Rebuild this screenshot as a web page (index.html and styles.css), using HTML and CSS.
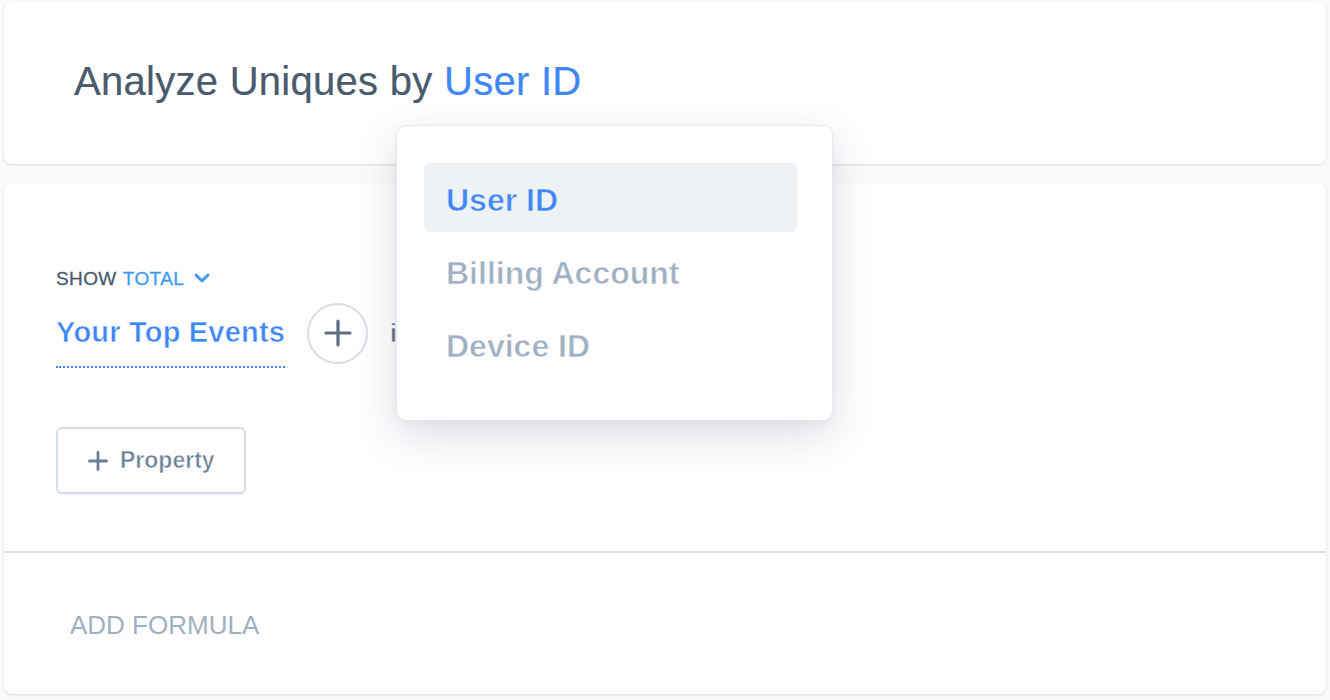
FILE: index.html
```html
<!DOCTYPE html>
<html>
<head>
<meta charset="utf-8">
<link rel="stylesheet" href="styles.css">
</head>
<body>
<div class="page">
  <section class="card header-card">
    <h1 class="title">Analyze Uniques by <span class="accent">User ID</span></h1>
  </section>
  <section class="card query-card">
    <div class="query-body">
      <div class="show-row">
        <span class="show-label">SHOW</span>
        <span class="show-value">TOTAL</span>
        <svg class="chevron" width="16" height="12" viewBox="0 0 16 12"><path d="M2 3 L8 9 L14 3" fill="none" stroke="#3d9af3" stroke-width="3" stroke-linecap="round" stroke-linejoin="round"/></svg>
      </div>
      <div class="event-row">
        <span class="event-name">Your Top Events</span>
        <button class="circle-add" type="button">
          <svg width="28" height="28" viewBox="0 0 28 28"><path d="M14 2 V26 M2 14 H26" stroke="#5e6e82" stroke-width="3.2" stroke-linecap="round"/></svg>
        </button>
        <span class="event-suffix">in</span>
      </div>
      <button class="property-btn" type="button">
        <svg width="20" height="20" viewBox="0 0 20 20"><path d="M10 1.5 V18.5 M1.5 10 H18.5" stroke="#6b7f96" stroke-width="2.8" stroke-linecap="round"/></svg>
        <span>Property</span>
      </button>
    </div>
    <div class="formula">ADD FORMULA</div>
  </section>

  <div class="dropdown">
    <div class="dd-item active">User ID</div>
    <div class="dd-item">Billing Account</div>
    <div class="dd-item">Device ID</div>
  </div>
</div>
</body>
</html>
```

FILE: styles.css
```css
* { box-sizing: border-box; }
html, body { margin: 0; padding: 0; }
body {
  background: #fbfbfb;
  font-family: "Liberation Sans", Arial, sans-serif;
  color: #4a5b6e;
}
.page {
  position: relative;
  width: 1330px;
  height: 700px;
  padding: 2px 4px 0 4px;
  display: flex;
  flex-direction: column;
  gap: 19px;
}
.card {
  background: #fff;
  border-radius: 8px;
  box-shadow: 0 1px 3px rgba(0, 0, 0, 0.13), 0 0 1px rgba(0,0,0,0.05);
}
.header-card {
  height: 162px;
  display: flex;
  align-items: center;
  padding: 0 70px;
}
.title {
  margin: 0 0 4px 0;
  font-size: 40px;
  font-weight: 400;
  letter-spacing: 0.28px;
  color: #4a5b6e;
  line-height: 1;
  -webkit-text-stroke: 0.2px currentColor;
}
.accent { color: #3f87f5; }

.query-card {
  height: 511px;
  display: flex;
  flex-direction: column;
  overflow: hidden;
}
.query-body {
  height: 370px;
  border-bottom: 2px solid #dae2ea;
  padding: 86px 52px 0 52px;
  display: flex;
  flex-direction: column;
  align-items: flex-start;
}
.show-row {
  display: flex;
  align-items: center;
  font-size: 19px;
  line-height: 20px;
  letter-spacing: 0.4px;
  -webkit-text-stroke: 0.3px currentColor;
}
.show-label { color: #4a5b6e; }
.show-value { color: #3d9af3; margin-left: 6px; }
.chevron { margin-left: 10px; margin-top: -2px; }

.event-row {
  display: flex;
  align-items: center;
  margin-top: 18px;
}
.event-name {
  font-size: 29px;
  font-weight: 700;
  letter-spacing: 0.2px;
  color: #3f87f5;
  -webkit-text-stroke: 0.55px #ffffff;
  line-height: 34px;
  padding-top: 8px;
  padding-bottom: 17px;
  border-bottom: 2px dotted #3f87f5;
}
.circle-add {
  width: 61px;
  height: 61px;
  margin-left: 22px;
  border: 2px solid #d6dee7;
  border-radius: 50%;
  background: #fff;
  display: flex;
  align-items: center;
  justify-content: center;
  padding: 0;
  margin-top: -9px;
}
.event-suffix {
  margin-left: 22px;
  font-size: 25px;
  font-weight: 700;
  color: #5a6b7e;
  -webkit-text-stroke: 0.6px #ffffff;
  margin-top: -9px;
}
.property-btn {
  margin-top: 59px;
  width: 190px;
  height: 67px;
  border: 2px solid #d6dee7;
  border-radius: 6px;
  background: #fff;
  box-shadow: 0 1px 2px rgba(0,0,0,0.06);
  display: flex;
  align-items: center;
  justify-content: flex-start;
  gap: 12px;
  font-family: "Liberation Sans", Arial, sans-serif;
  font-size: 23px;
  font-weight: 700;
  color: #6b7f96;
  padding: 0 0 0 30px;
  -webkit-text-stroke: 0.55px #ffffff;
}
.formula {
  flex: 1;
  background: #ffffff;
  display: flex;
  align-items: center;
  padding-left: 66px;
  padding-top: 4px;
  font-size: 26px;
  color: #a0b0c3;
}

.dropdown {
  position: absolute;
  left: 396px;
  top: 125px;
  width: 437px;
  height: 296px;
  background: #fff;
  border: 1px solid #e6eaef;
  border-radius: 10px;
  box-shadow: 0 14px 40px rgba(60, 70, 110, 0.18), 0 2px 6px rgba(0,0,0,0.04);
  padding: 37px 35px 0 27px;
  display: flex;
  flex-direction: column;
  gap: 4px;
}
.dd-item {
  height: 69px;
  border-radius: 6px;
  padding-left: 22px;
  display: flex;
  align-items: center;
  font-size: 32px;
  font-weight: 700;
  color: #a0b0c3;
  -webkit-text-stroke: 0.6px #ffffff;
  padding-top: 6px;
}
.dd-item.active {
  background: #eff2f5;
  color: #3f87f5;
  -webkit-text-stroke: 0.6px #eff2f5;
}
```
